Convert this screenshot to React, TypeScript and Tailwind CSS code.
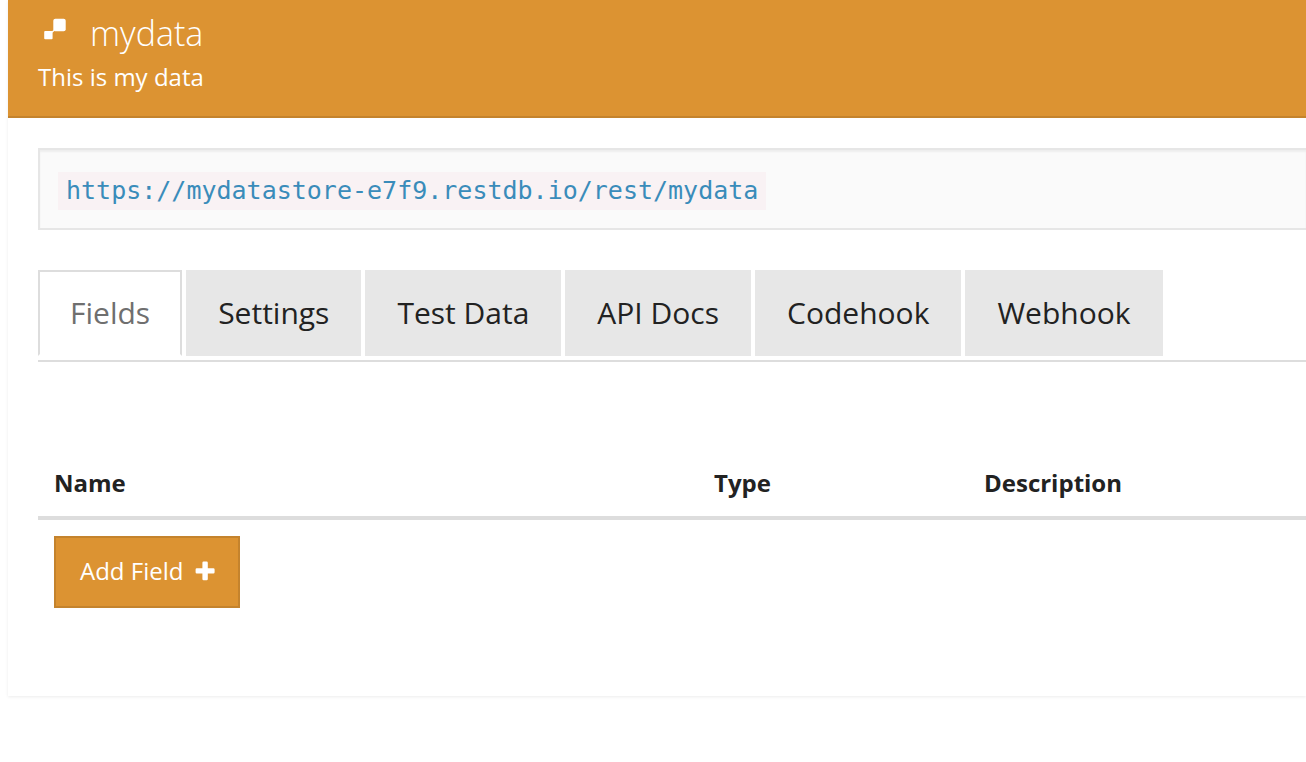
import React from "react";

const tabs = ["Fields", "Settings", "Test Data", "API Docs", "Codehook", "Webhook"];

export default function App() {
  return (
    <div className="overflow-hidden pb-16 pl-2 font-['Open_Sans',sans-serif] text-[#222]">
      <main className="bg-white pb-[88px] shadow-[0_1px_3px_rgba(0,0,0,0.08)]">
        <header className="h-[118px] border-b-2 border-[#c4832d] bg-[#dc9332] pl-[30px] text-white">
          <h1 className="flex h-[61px] items-center pt-1 text-[34px] leading-[48px] font-light">
            <svg aria-hidden="true" className="mr-6 mb-2 h-[22px] w-[28px]" viewBox="0 0 28 22" fill="currentColor">
              <rect x="15.3" y="0.8" width="12.4" height="12.4" rx="2" />
              <rect x="6.2" y="13" width="8.4" height="8.2" rx="1" />
              <path d="M13.5 13.8L16.2 11.5L16.8 12.8L14.2 14.8Z" />
            </svg>
            mydata
          </h1>
          <p className="text-[24px] leading-8">This is my data</p>
        </header>

        <div className="pt-[30px] pl-[30px]">
          <div className="border-2 border-r-0 border-[#e6e6e6] bg-[#fafafa] pt-[22px] pb-[18px] pl-[18px] shadow-[inset_0_2px_2px_rgba(0,0,0,0.05)]">
            <code className="block w-fit bg-[#f9f2f4] px-2 font-['DejaVu_Sans_Mono',monospace] text-[25px] leading-[38px]">
              <a href="#endpoint" className="text-[#3a8cba]">https://mydatastore-e7f9.restdb.io/rest/mydata</a>
            </code>
          </div>

          <div role="tablist" className="mt-10 flex h-[92px] gap-1 border-b-2 border-[#ddd] text-[30px]">
            {tabs.map((tab, i) => (
              <button
                key={tab}
                role="tab"
                aria-selected={i === 0}
                className={
                  i === 0
                    ? "h-[86px] border-2 border-b-transparent border-[#ddd] bg-white px-[30px] pb-[2px] text-[#6f6f6f]"
                    : "h-[86px] bg-[#e7e7e7] px-8 pb-[2px]"
                }
              >
                {tab}
              </button>
            ))}
          </div>

          <table className="mt-[88px] w-full table-fixed text-left text-[24px]">
            <thead>
              <tr className="h-[68px] border-b-4 border-[#ddd]">
                <th className="w-[660px] pl-4 font-bold">Name</th>
                <th className="w-[270px] pl-4 font-bold">Type</th>
                <th className="pl-4 font-bold">Description</th>
              </tr>
            </thead>
            <tbody>
              <tr>
                <td colSpan={3} className="pt-4 pl-4">
                  <button className="flex h-[72px] items-center gap-3 border-2 border-[#c4832d] bg-[#dc9332] pr-[23px] pb-[2px] pl-6 text-white">
                    Add Field
                    <svg aria-hidden="true" className="h-5 w-5" viewBox="0 0 20 20" fill="currentColor">
                      <path d="M8.6 0.5h3q1.2 0 1.2 1.2v5.6h5.6q1.2 0 1.2 1.2v2.8q0 1.2-1.2 1.2h-5.6v5.6q0 1.2-1.2 1.2h-3q-1.2 0-1.2-1.2v-5.6H1.8q-1.2 0-1.2-1.2V8.5q0-1.2 1.2-1.2h5.6V1.7q0-1.2 1.2-1.2z" />
                    </svg>
                  </button>
                </td>
              </tr>
            </tbody>
          </table>
        </div>
      </main>
    </div>
  );
}
